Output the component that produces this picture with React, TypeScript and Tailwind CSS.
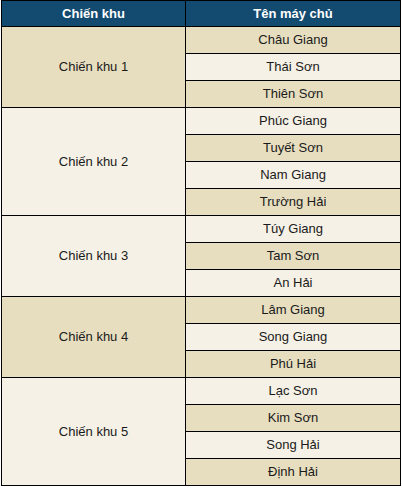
const zones = [
  { name: "Chiến khu 1", dark: true, servers: ["Châu Giang", "Thái Sơn", "Thiên Sơn"] },
  { name: "Chiến khu 2", dark: false, servers: ["Phúc Giang", "Tuyết Sơn", "Nam Giang", "Trường Hải"] },
  { name: "Chiến khu 3", dark: false, servers: ["Túy Giang", "Tam Sơn", "An Hải"] },
  { name: "Chiến khu 4", dark: true, servers: ["Lâm Giang", "Song Giang", "Phú Hải"] },
  { name: "Chiến khu 5", dark: false, servers: ["Lạc Sơn", "Kim Sơn", "Song Hải", "Định Hải"] },
];

const dark = "bg-[#e7dec0]";
const light = "bg-[#f5f1e6]";

export default function App() {
  let i = 0;
  return (
    <div className="bg-white h-[489px] pl-px font-['Liberation_Sans',Tahoma,sans-serif] text-[13px] text-[#1a1a1a]">
      <table className="w-[400px] border-collapse border border-black">
        <thead>
          <tr className="bg-[#134a6f] text-white">
            <th className="h-[26px] w-[184px] border border-black p-0 font-bold text-[13px]">Chiến khu</th>
            <th className="h-[26px] border border-black p-0 font-bold text-[13px]">Tên máy chủ</th>
          </tr>
        </thead>
        <tbody>
          {zones.map((z) =>
            z.servers.map((s, j) => {
              const rowDark = i++ % 2 === 0;
              return (
                <tr key={s}>
                  {j === 0 && (
                    <td
                      rowSpan={z.servers.length}
                      className={`border border-black p-0 text-center ${z.dark ? dark : light}`}
                    >
                      {z.name}
                    </td>
                  )}
                  <td className={`h-[27px] border border-black p-0 text-center ${rowDark ? dark : light}`}>{s}</td>
                </tr>
              );
            })
          )}
        </tbody>
      </table>
    </div>
  );
}
